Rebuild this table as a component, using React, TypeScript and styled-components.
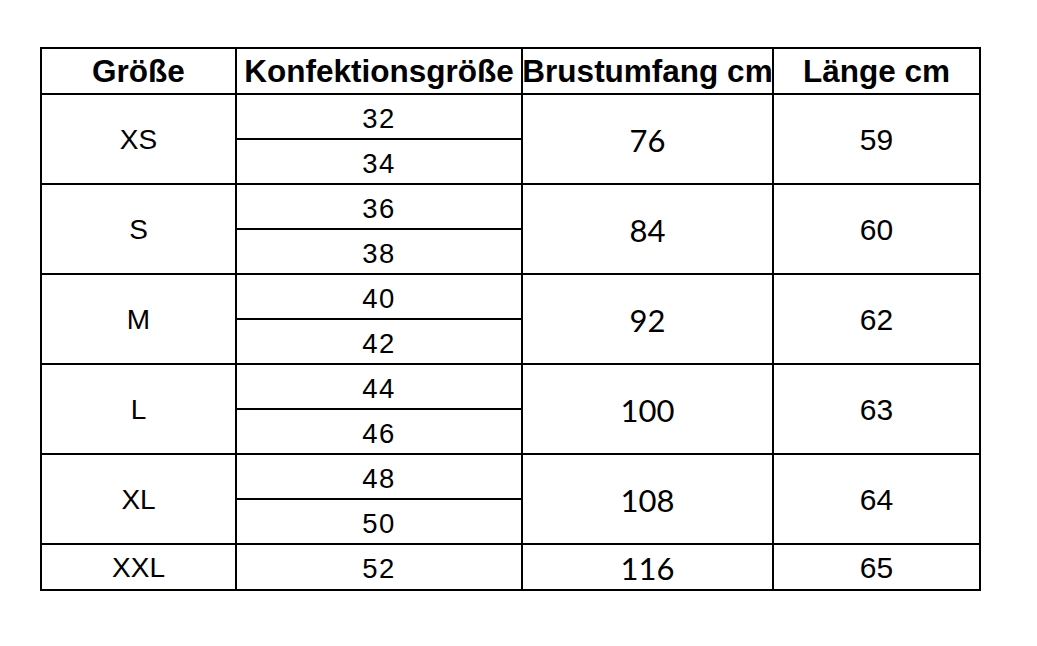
import React from "react";
import styled, { createGlobalStyle } from "styled-components";

const Global = createGlobalStyle`
  html, body { margin: 0; padding: 0; background: #ffffff; }
  body { font-family: "Liberation Sans", Arial, sans-serif; color: #000; }
`;

const Page = styled.div`
  padding: 47px 0 0 40px;
  width: 1037px;
  height: 646px;
  box-sizing: border-box;
`;

const Table = styled.div`
  display: inline-grid;
  grid-template-columns: 193px 284px 249px 205px;
  grid-template-rows: 44px repeat(10, 43px) 44px;
  gap: 2px;
  padding: 2px;
  background: #000;
`;

const Cell = styled.div<{ $rows?: number; $font?: "arial" | "lato"; $size?: number; $shift?: number; $spacing?: number }>`
  background: #fff;
  display: flex;
  align-items: center;
  justify-content: center;
  grid-row: span ${(p) => p.$rows ?? 1};
  font-family: ${(p) =>
    p.$font === "lato" ? `"Lato", "Liberation Sans", sans-serif` : `"Liberation Sans", Arial, sans-serif`};
  font-size: ${(p) => p.$size ?? 30}px;
  letter-spacing: ${(p) => p.$spacing ?? 0}px;
  padding-top: ${(p) => p.$shift ?? 0}px;
  box-sizing: border-box;
  line-height: 1;
  white-space: nowrap;
`;

const Head = styled(Cell)`
  font-weight: 700;
  font-size: 31.5px;
  letter-spacing: 0;
  padding-top: 2px;
`;

type Group = { size: string; konf: string[]; brust: string; laenge: string };

const groups: Group[] = [
  { size: "XS", konf: ["32", "34"], brust: "76", laenge: "59" },
  { size: "S", konf: ["36", "38"], brust: "84", laenge: "60" },
  { size: "M", konf: ["40", "42"], brust: "92", laenge: "62" },
  { size: "L", konf: ["44", "46"], brust: "100", laenge: "63" },
  { size: "XL", konf: ["48", "50"], brust: "108", laenge: "64" },
  { size: "XXL", konf: ["52"], brust: "116", laenge: "65" },
];

export default function App() {
  return (
    <>
      <Global />
      <Page>
        <Table>
          <Head>Größe</Head>
          <Head>Konfektionsgröße</Head>
          <Head>Brustumfang cm</Head>
          <Head>Länge cm</Head>
          {groups.map((g) => (
            <React.Fragment key={g.size}>
              <Cell $rows={g.konf.length} $size={28} $shift={2}>
                {g.size}
              </Cell>
              <Cell $size={27.5} $spacing={1.5} $shift={4}>
                {g.konf[0]}
              </Cell>
              <Cell $rows={g.konf.length} $font="lato" $size={31} $shift={2}>
                {g.brust}
              </Cell>
              <Cell $rows={g.konf.length} $size={30} $shift={2}>
                {g.laenge}
              </Cell>
              {g.konf.slice(1).map((k) => (
                <Cell key={k} $size={27.5} $spacing={1.5} $shift={4}>
                  {k}
                </Cell>
              ))}
            </React.Fragment>
          ))}
        </Table>
      </Page>
    </>
  );
}
